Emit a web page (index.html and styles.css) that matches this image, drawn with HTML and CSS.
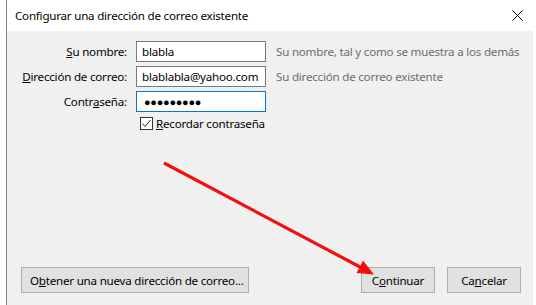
FILE: index.html
```html
<!DOCTYPE html>
<html lang="es">
<head>
    <meta charset="UTF-8">
    <title>Configurar una dirección de correo existente</title>
    <link rel="stylesheet" href="styles.css">
</head>
<body>
    <div class="window">
        <div class="titlebar">
            <span class="title">Configurar una dirección de correo existente</span>
            <svg class="close" width="11" height="11" viewBox="0 0 11 11">
                <path d="M0.5 0.5 L10.5 10.5 M10.5 0.5 L0.5 10.5" stroke="#000" stroke-width="1" fill="none"/>
            </svg>
        </div>
        <div class="content">
            <div class="form">
                <label class="lbl"><u>S</u>u nombre:</label>
                <div class="field">blabla</div>
                <span class="hint">Su nombre, tal y como se muestra a los demás</span>

                <label class="lbl"><u>D</u>irección de correo:</label>
                <div class="field">blablabla@yahoo.com</div>
                <span class="hint">Su dirección de correo existente</span>

                <label class="lbl">Contr<u>a</u>seña:</label>
                <div class="field focused"><span class="dots">●●●●●●●●●</span></div>
                <span></span>

                <span></span>
                <label class="check">
                    <svg class="box" width="13" height="13" viewBox="0 0 13 13">
                        <rect x="0.5" y="0.5" width="12" height="12" fill="#fff" stroke="#333"/>
                        <path d="M2.5 6.5 L5 9.5 L10.5 3" stroke="#333" stroke-width="1" fill="none"/>
                    </svg>
                    <span><u>R</u>ecordar contraseña</span>
                </label>
                <span></span>
            </div>
            <div class="buttons">
                <button class="btn wide">O<u>b</u>tener una nueva dirección de correo...</button>
                <div class="spacer"></div>
                <button class="btn">C<u>o</u>ntinuar</button>
                <button class="btn">Ca<u>n</u>celar</button>
            </div>
        </div>
    </div>

    <svg class="arrow" width="536" height="305" viewBox="0 0 536 305">
        <line x1="164" y1="163" x2="361" y2="267.5" stroke="#f40f0f" stroke-width="3.2"/>
        <polygon points="374,274.5 356.5,273 363,260.5" fill="#f40f0f"/>
    </svg>
</body>
</html>
```

FILE: styles.css
```css
html, body {
    margin: 0;
    height: 100%;
    background: #fff;
}
body {
    font-family: "Noto Sans", "Open Sans", sans-serif;
    font-size: 11.6px;
    letter-spacing: -0.22px;
    color: #000;
    position: relative;
    overflow: hidden;
}
.window {
    margin-left: 6px;
    width: 526px;
    height: 305px;
    border-left: 1px solid #808080;
    display: flex;
    flex-direction: column;
}
.titlebar {
    height: 31px;
    background: #fff;
    display: flex;
    align-items: center;
    padding-left: 8px;
    padding-right: 10px;
}
.title {
    flex: 1;
    margin-top: -1px;
}
.close {
    margin-top: -1px;
}
.content {
    flex: 1;
    background: #f0f0f0;
    display: flex;
    flex-direction: column;
    justify-content: space-between;
    padding-top: 10px;
    padding-bottom: 12px;
}
.form {
    display: grid;
    grid-template-columns: 120px 130px auto;
    grid-auto-rows: 21px;
    column-gap: 9px;
    row-gap: 4px;
    align-items: center;
}
.lbl {
    text-align: right;
    white-space: nowrap;
}
.field {
    box-sizing: border-box;
    height: 21px;
    border: 1px solid #7a7a7a;
    background: #fff;
    padding: 0 5px;
    display: flex;
    align-items: center;
    white-space: nowrap;
}
.field.focused {
    border-color: #0078d7;
}
.dots {
    font-family: "Liberation Sans", sans-serif;
    font-size: 11px;
    letter-spacing: -0.3px;
    padding-left: 2px;
}
.hint {
    color: #6d6d6d;
    white-space: nowrap;
    padding-left: 1px;
}
.check {
    align-self: start;
    display: flex;
    align-items: center;
    gap: 3px;
    padding-left: 4px;
    white-space: nowrap;
}
.box {
    flex-shrink: 0;
}
.buttons {
    display: flex;
    gap: 12px;
    padding-left: 14px;
    padding-right: 12px;
}
.spacer {
    flex: 1;
}
.btn {
    font: inherit;
    letter-spacing: inherit;
    white-space: nowrap;
    height: 26px;
    width: 74px;
    padding: 0;
    background: #e1e1e1;
    border: 1px solid #adadad;
    color: #000;
}
.btn.wide {
    width: 228px;
    text-align: left;
    padding-left: 8px;
}
.arrow {
    position: absolute;
    left: 0;
    top: 0;
}
```
